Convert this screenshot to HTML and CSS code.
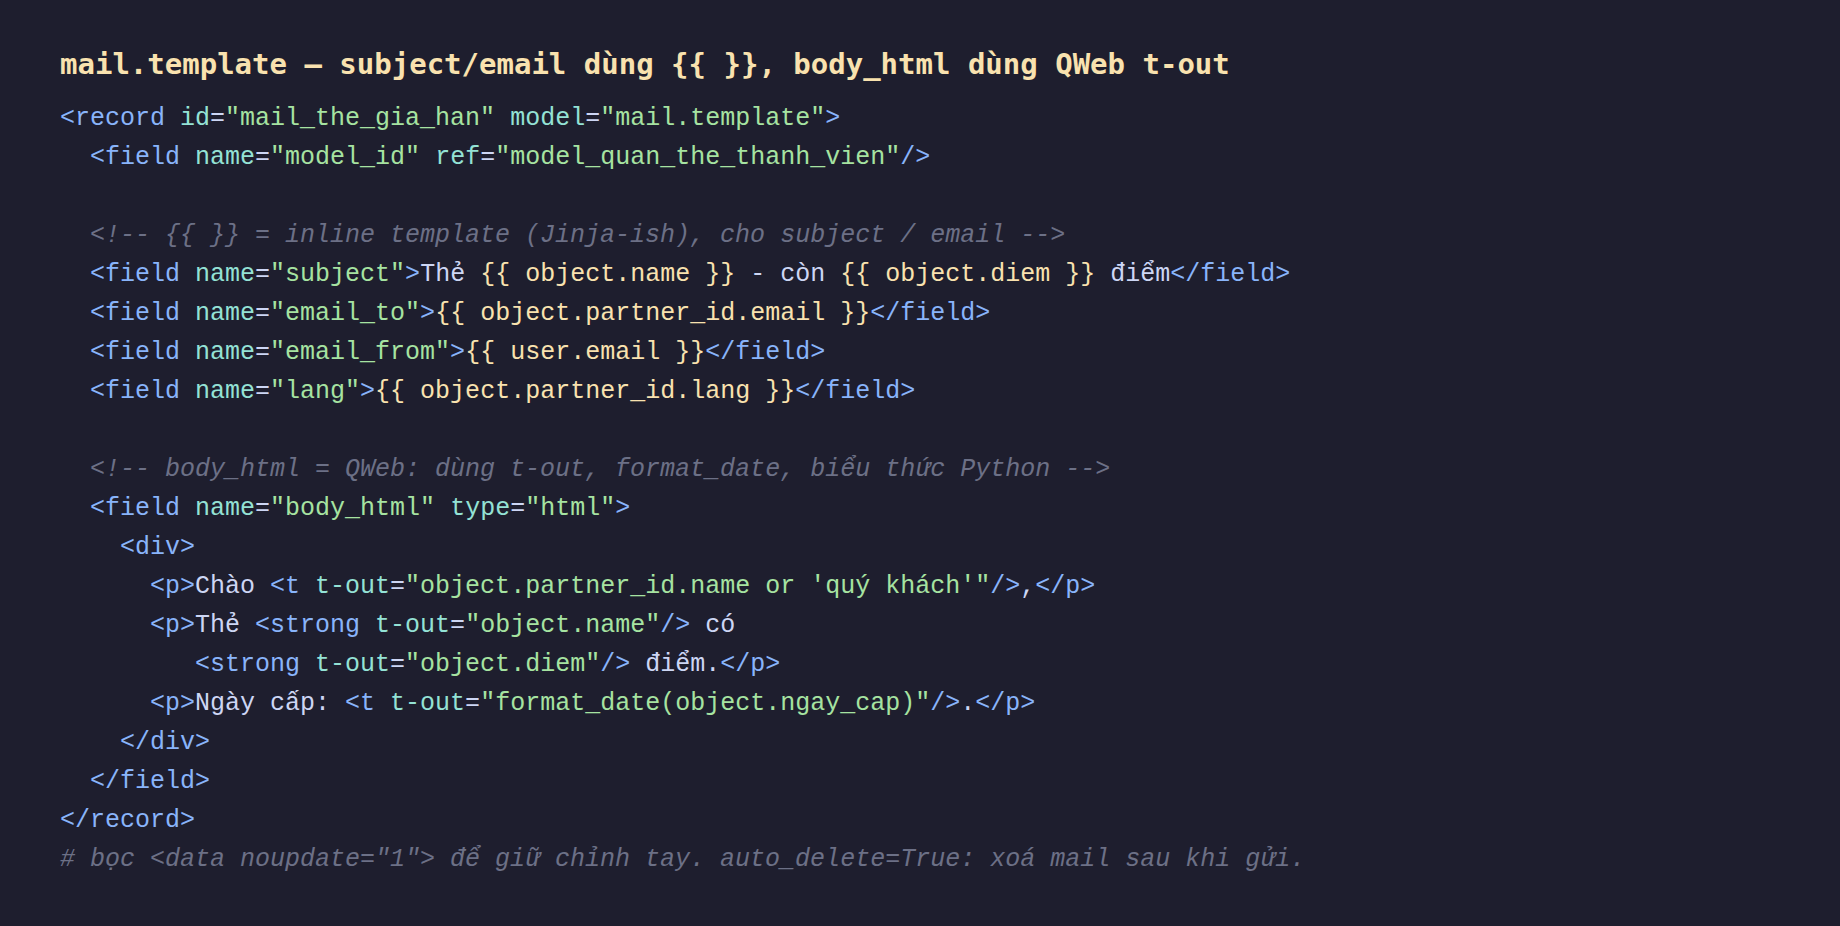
FILE: index.html
```html
<!DOCTYPE html>
<html lang="vi">
<head>
<meta charset="utf-8">
<title>mail.template</title>
<link rel="stylesheet" href="styles.css">
</head>
<body>
<main class="panel">
<h2 class="title">mail.template — subject/email dùng {{ }}, body_html dùng QWeb t-out</h2>
<pre class="code"><span class="t">&lt;record</span> <span class="a">id</span>=<span class="s">"mail_the_gia_han"</span> <span class="a">model</span>=<span class="s">"mail.template"</span><span class="t">&gt;</span>
  <span class="t">&lt;field</span> <span class="a">name</span>=<span class="s">"model_id"</span> <span class="a">ref</span>=<span class="s">"model_quan_the_thanh_vien"</span><span class="t">/&gt;</span>

  <span class="c">&lt;!-- {{ }} = inline template (Jinja-ish), cho subject / email --&gt;</span>
  <span class="t">&lt;field</span> <span class="a">name</span>=<span class="s">"subject"</span><span class="t">&gt;</span>Thẻ <span class="e">{{ object.name }}</span> - còn <span class="e">{{ object.diem }}</span> điểm<span class="t">&lt;/field&gt;</span>
  <span class="t">&lt;field</span> <span class="a">name</span>=<span class="s">"email_to"</span><span class="t">&gt;</span><span class="e">{{ object.partner_id.email }}</span><span class="t">&lt;/field&gt;</span>
  <span class="t">&lt;field</span> <span class="a">name</span>=<span class="s">"email_from"</span><span class="t">&gt;</span><span class="e">{{ user.email }}</span><span class="t">&lt;/field&gt;</span>
  <span class="t">&lt;field</span> <span class="a">name</span>=<span class="s">"lang"</span><span class="t">&gt;</span><span class="e">{{ object.partner_id.lang }}</span><span class="t">&lt;/field&gt;</span>

  <span class="c">&lt;!-- body_html = QWeb: dùng t-out, format_date, biểu thức Python --&gt;</span>
  <span class="t">&lt;field</span> <span class="a">name</span>=<span class="s">"body_html"</span> <span class="a">type</span>=<span class="s">"html"</span><span class="t">&gt;</span>
    <span class="t">&lt;div&gt;</span>
      <span class="t">&lt;p&gt;</span>Chào <span class="t">&lt;t</span> <span class="a">t-out</span>=<span class="s">"object.partner_id.name or 'quý khách'"</span><span class="t">/&gt;</span>,<span class="t">&lt;/p&gt;</span>
      <span class="t">&lt;p&gt;</span>Thẻ <span class="t">&lt;strong</span> <span class="a">t-out</span>=<span class="s">"object.name"</span><span class="t">/&gt;</span> có
         <span class="t">&lt;strong</span> <span class="a">t-out</span>=<span class="s">"object.diem"</span><span class="t">/&gt;</span> điểm.<span class="t">&lt;/p&gt;</span>
      <span class="t">&lt;p&gt;</span>Ngày cấp: <span class="t">&lt;t</span> <span class="a">t-out</span>=<span class="s">"format_date(object.ngay_cap)"</span><span class="t">/&gt;</span>.<span class="t">&lt;/p&gt;</span>
    <span class="t">&lt;/div&gt;</span>
  <span class="t">&lt;/field&gt;</span>
<span class="t">&lt;/record&gt;</span>
<span class="c"># bọc &lt;data noupdate="1"&gt; để giữ chỉnh tay. auto_delete=True: xoá mail sau khi gửi.</span></pre>
</main>
</body>
</html>
```

FILE: styles.css
```css
html, body {
  margin: 0;
  padding: 0;
  background: #1e1e2e;
}

body {
  min-height: 926px;
  color: #cdd6f4;
}

.panel {
  padding: 46px 60px 0 60px;
}

.title {
  margin: 0;
  font-family: "DejaVu Sans Mono", monospace;
  font-weight: bold;
  font-size: 29px;
  line-height: 36px;
  color: #f9e2af;
}

.code {
  margin: 17px 0 0 0;
  font-family: "Liberation Mono", monospace;
  font-size: 25px;
  line-height: 39px;
  color: #cdd6f4;
  white-space: pre;
}

.t { color: #89b4fa; }
.a { color: #94e2d5; }
.s { color: #a6e3a1; }
.e { color: #f9e2af; }
.c { color: #6c7086; font-style: italic; }
```
